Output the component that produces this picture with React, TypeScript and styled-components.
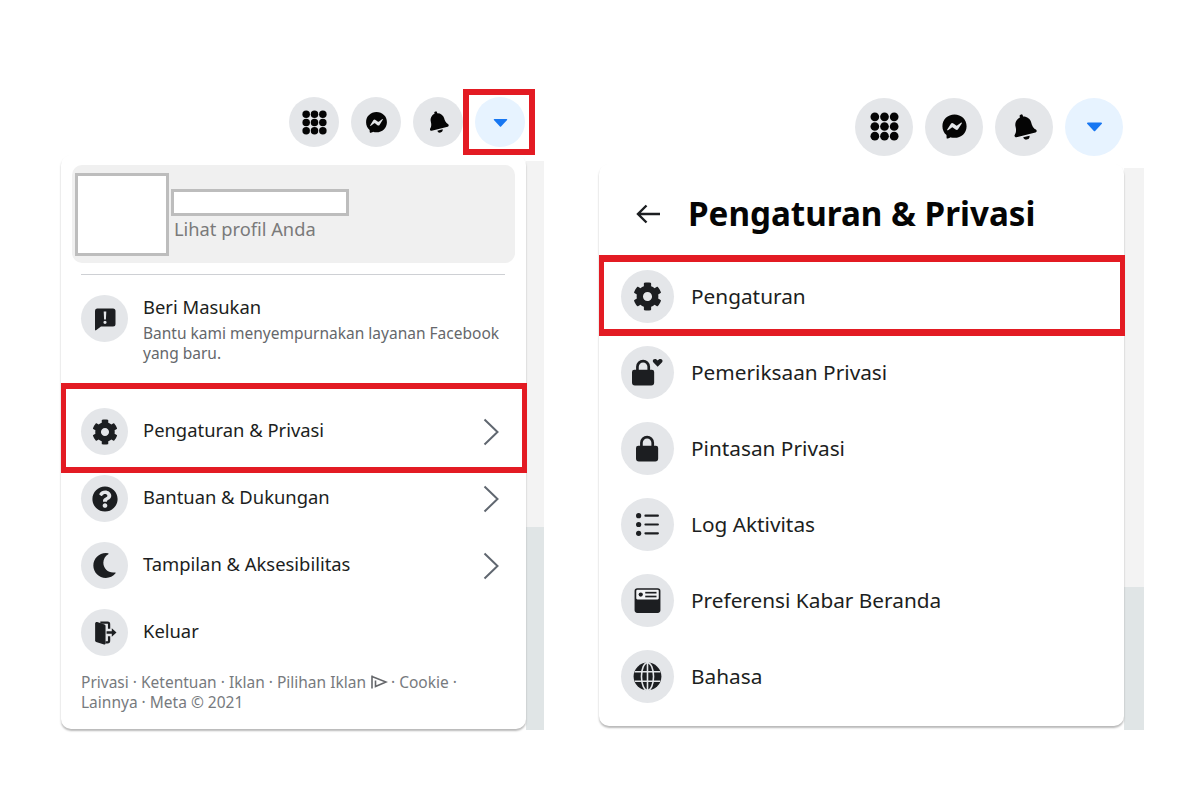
import React from 'react'
import styled, { createGlobalStyle } from 'styled-components'
import { FaBell, FaCog, FaMoon, FaQuestionCircle } from 'react-icons/fa'

const GlobalStyle = createGlobalStyle`
  html, body {
    margin: 0;
    background: #fff;
  }
  body {
    font-family: "Noto Sans", "Open Sans", Arial, sans-serif;
    color: #1c1e21;
  }
`

const Page = styled.div`
  width: 1200px;
  height: 795px;
  padding: 89px 0 0 61px;
  box-sizing: border-box;
  display: flex;
  gap: 55px;
  overflow: hidden;
`

const Screen = styled.section<{ $width: number }>`
  width: ${({ $width }) => $width}px;
  display: flex;
  flex-direction: column;
`

const NavBar = styled.div<{ $size: number; $gap: number; $height: number; $right: number }>`
  height: ${({ $height }) => $height}px;
  padding-right: ${({ $right }) => $right}px;
  display: flex;
  align-items: center;
  justify-content: flex-end;
  gap: ${({ $gap }) => $gap}px;
  --nav-size: ${({ $size }) => $size}px;
`

const NavButton = styled.div<{ $active?: boolean; $marked?: boolean }>`
  position: relative;
  width: var(--nav-size);
  height: var(--nav-size);
  border-radius: 50%;
  background: ${({ $active }) => ($active ? '#e7f3ff' : '#e4e6e9')};
  display: flex;
  align-items: center;
  justify-content: center;
  color: #050505;
  ${({ $marked }) =>
    $marked &&
    `
    &::after {
      content: '';
      position: absolute;
      left: -12px;
      top: -8px;
      width: 72px;
      height: 66px;
      box-sizing: border-box;
      border: 6px solid #e31b23;
    }
  `}
`

const Body = styled.div`
  display: flex;
  align-items: stretch;
`

const Panel = styled.div<{ $width: number; $height: number }>`
  width: ${({ $width }) => $width}px;
  height: ${({ $height }) => $height}px;
  flex: none;
  background: #fff;
  border-radius: 10px;
  box-shadow: 0 2px 2px rgba(0, 0, 0, 0.28);
  position: relative;
  z-index: 1;
  box-sizing: border-box;
`

const Backdrop = styled.div<{ $split: number; $top: number; $bottom: number }>`
  flex: 1;
  margin: ${({ $top }) => $top}px 0 ${({ $bottom }) => $bottom}px;
  background: linear-gradient(
    to bottom,
    #f3f3f3 0,
    #f3f3f3 ${({ $split }) => $split}px,
    #e0e5e6 ${({ $split }) => $split}px,
    #e0e5e6 100%
  );
`

const ProfileCard = styled.div`
  margin: 10px 11px 0;
  height: 98px;
  border-radius: 10px;
  background: #f0f0f0;
  display: flex;
  padding: 8px 3px;
  box-sizing: border-box;
`

const Avatar = styled.div`
  width: 94px;
  height: 83px;
  flex: none;
  box-sizing: border-box;
  background: #fff;
  border: 3px solid #bdbdbd;
`

const ProfileText = styled.div`
  margin-left: 2px;
  padding-top: 16px;
`

const NameBox = styled.div`
  width: 178px;
  height: 27px;
  box-sizing: border-box;
  background: #fff;
  border: 3px solid #bdbdbd;
`

const ProfileLink = styled.div`
  margin: 1px 0 0 3px;
  font-size: 18.3px;
  line-height: 24px;
  color: #7a7a7a;
`

const Divider = styled.hr`
  margin: 11px 21px 0 20px;
  border: 0;
  height: 1px;
  background: #ced0d4;
`

const Row = styled.div<{ $height: number; $left: number; $gap: number; $marked?: 'left' | 'right' }>`
  position: relative;
  height: ${({ $height }) => $height}px;
  padding-left: ${({ $left }) => $left}px;
  display: flex;
  align-items: center;
  gap: ${({ $gap }) => $gap}px;
  ${({ $marked }) =>
    $marked === 'left' &&
    `
    &::after {
      content: '';
      position: absolute;
      left: 0;
      right: -1px;
      top: -15px;
      bottom: -8px;
      box-sizing: border-box;
      border-style: solid;
      border-color: #e31b23;
      border-width: 6px 5px;
    }
  `}
  ${({ $marked }) =>
    $marked === 'right' &&
    `
    &::after {
      content: '';
      position: absolute;
      left: 0;
      right: -1px;
      top: -3px;
      bottom: -2px;
      box-sizing: border-box;
      border-style: solid;
      border-color: #e31b23;
      border-width: 7px 5px;
    }
  `}
`

const FeedbackRow = styled.div`
  display: flex;
  gap: 15px;
  padding: 20px 0 0 20px;
  height: 98px;
  margin-bottom: 25px;
  box-sizing: border-box;
`

const IconCircle = styled.div<{ $size: number }>`
  width: ${({ $size }) => $size}px;
  height: ${({ $size }) => $size}px;
  flex: none;
  border-radius: 50%;
  background: #e4e6e9;
  display: flex;
  align-items: center;
  justify-content: center;
  color: #1c1e21;
`

const RowLabel = styled.span`
  font-size: 18.4px;
  line-height: 26px;
  padding-bottom: 3px;
  color: #1c1e21;
  flex: 1;
`

const FeedbackText = styled.div`
  margin-top: -1px;
`

const FeedbackTitle = styled.div`
  font-size: 18.4px;
  line-height: 26px;
`

const FeedbackHint = styled.div`
  margin-top: 3px;
  width: 375px;
  font-size: 15.5px;
  line-height: 20px;
  color: #65676b;
`

const Chevron = styled.svg`
  width: 16px;
  height: 28px;
  margin-right: 27px;
  flex: none;
  fill: none;
  stroke: #606770;
  stroke-width: 2;
`

const Legal = styled.div`
  margin: 6px 0 0 20px;
  font-size: 15.5px;
  line-height: 20px;
  color: #777a7e;
`

const LegalLine = styled.div`
  white-space: nowrap;
`

const AdMark = styled.svg`
  width: 18px;
  height: 16px;
  margin: 0 3px 0 4px;
  vertical-align: -2px;
  fill: none;
  stroke: #65676b;
  stroke-width: 1.6;
`

const PanelHeader = styled.div`
  height: 91px;
  display: flex;
  align-items: center;
  padding: 8px 0 0 37px;
  gap: 28px;
  box-sizing: border-box;
`

const BackArrow = styled.svg`
  width: 24px;
  height: 20px;
  flex: none;
  fill: none;
  stroke: #1c1e21;
  stroke-width: 2.4;
`

const PanelTitle = styled.h1`
  margin: 0;
  font-size: 33.2px;
  font-weight: 700;
  color: #050505;
  letter-spacing: 0;
`

const SettingsList = styled.div`
  display: flex;
  flex-direction: column;
  padding-top: 3px;
`

const SettingsLabel = styled.span`
  font-size: 20.8px;
  color: #1c1e21;
`

function GridIcon({ size }: { size: number }) {
  const cells = [4, 12, 20]
  return (
    <svg width={size} height={size} viewBox="0 0 24 24" fill="currentColor">
      {cells.map(y => cells.map(x => <circle key={`${x}-${y}`} cx={x} cy={y} r="3.6" />))}
    </svg>
  )
}

function MessengerIcon({ size }: { size: number }) {
  return (
    <svg width={size} height={size} viewBox="0 0 24 24" fill="currentColor">
      <path d="M12 2C6.36 2 2 6.13 2 11.7c0 2.91 1.19 5.44 3.14 7.17.16.14.26.35.27.57l.05 1.78c.02.57.61.94 1.13.71l1.98-.87c.17-.08.36-.09.53-.04.91.25 1.88.38 2.9.38 5.64 0 10-4.13 10-9.7S17.64 2 12 2zm6 7.46-2.94 4.66a1.5 1.5 0 0 1-2.17.4l-2.34-1.75a.6.6 0 0 0-.72 0l-3.16 2.4c-.42.32-.97-.18-.69-.63l2.94-4.66a1.5 1.5 0 0 1 2.17-.4l2.34 1.75a.6.6 0 0 0 .72 0l3.16-2.4c.42-.32.97.18.69.63z" />
    </svg>
  )
}

function CaretIcon({ size }: { size: number }) {
  return (
    <svg width={size} height={size} viewBox="0 0 24 24" fill="#1877f2">
      <path d="M3.5 7h17a1 1 0 0 1 .8 1.6l-8.500 9a1.100 1.100 0 0 1-1.600 0l-8.500-9A1 1 0 0 1 3.500 7z" />
    </svg>
  )
}

function BellIcon({ size }: { size: number }) {
  return <FaBell size={size} style={{ transform: 'rotate(-14deg)' }} />
}

function FeedbackIcon({ size }: { size: number }) {
  return (
    <svg width={size} height={size} viewBox="0 0 24 24">
      <path
        fill="currentColor"
        d="M4 1.500h16A2.500 2.500 0 0 1 22.500 4v13a2.500 2.500 0 0 1-2.500 2.500H8l-5 3.800c-.5.3-1 0-1-.5V4A2.500 2.500 0 0 1 4 1.500z"
      />
      <path fill="#e4e6e9" d="M10.700 4.500h2.600l-.4 8h-1.800zM12 13.700a1.600 1.600 0 1 1 0 3.200 1.600 1.600 0 0 1 0-3.200z" />
    </svg>
  )
}

function DoorIcon({ size }: { size: number }) {
  return (
    <svg width={size} height={size} viewBox="0 0 24 24" fill="currentColor">
      <path d="M3 3.400C3 2.400 4 1.700 5 2l7 2.300c.6.2 1 .8 1 1.400v16.800c0 .7-.7 1.200-1.400 1L4 21c-.6-.2-1-.7-1-1.400z" />
      <path d="M8 1.500h7A2.500 2.500 0 0 1 17.500 4v4.500h-2.200V4c0-.2-.1-.3-.3-.3H8zM15.300 15.500h2.200V20a2.500 2.500 0 0 1-2.500 2.500h-2v-2.200h2c.2 0 .3-.1.3-.3z" />
      <path d="M14 10.700h5V8l4.500 4-4.500 4v-2.700h-5z" />
    </svg>
  )
}

const lockShape =
  'M3.500 10V7.500a6 6 0 0 1 12 0V10H17a2 2 0 0 1 2 2v9a2.500 2.500 0 0 1-2.500 2.500h-14A2.500 2.500 0 0 1 0 21v-9a2 2 0 0 1 2-2zm2.300 0h7.400V7.500a3.700 3.700 0 0 0-7.400 0z'

function LockIcon({ height }: { height: number }) {
  return (
    <svg width={(height * 19) / 24} height={height} viewBox="0 0 19 24" fill="currentColor">
      <path d={lockShape} />
    </svg>
  )
}

function LockHeartIcon({ height }: { height: number }) {
  return (
    <svg width={(height * 27) / 24} height={height} viewBox="0 0 27 24" fill="currentColor">
      <path d={lockShape} />
      <path d="M22 7.500 18.400 3.900C17.200 2.600 18 .8 19.700 .8c1 0 1.800.5 2.300 1.300.5-.8 1.300-1.300 2.300-1.300 1.700 0 2.500 1.800 1.300 3.100z" />
    </svg>
  )
}

function ListIcon({ size }: { size: number }) {
  return (
    <svg width={size} height={size} viewBox="0 0 24 24" fill="currentColor">
      <circle cx="3.500" cy="3.500" r="2.500" />
      <circle cx="3.500" cy="12" r="2.500" />
      <circle cx="3.500" cy="20.500" r="2.500" />
      <rect x="9" y="2.500" width="14" height="2" rx="1" />
      <rect x="9" y="11" width="14" height="2" rx="1" />
      <rect x="9" y="19.500" width="14" height="2" rx="1" />
    </svg>
  )
}

function FeedPrefsIcon({ size }: { size: number }) {
  return (
    <svg width={size} height={size} viewBox="0 0 24 24">
      <rect x="0.500" y="1" width="23" height="22" rx="2.500" fill="currentColor" />
      <rect x="2" y="2.500" width="20" height="8.500" rx="1" fill="#f2f3f5" />
      <circle cx="6" cy="6.700" r="1.900" fill="currentColor" />
      <rect x="10" y="4.300" width="10" height="1.500" fill="currentColor" />
      <rect x="10" y="7.700" width="10" height="1.500" fill="currentColor" />
    </svg>
  )
}

function GlobeIcon({ size }: { size: number }) {
  return (
    <svg width={size} height={size} viewBox="0 0 24 24">
      <circle cx="12" cy="12" r="11.500" fill="currentColor" />
      <g fill="none" stroke="#e4e6e9" strokeWidth="1.300">
        <ellipse cx="12" cy="12" rx="5" ry="11.500" />
        <path d="M12 .5v23M1.500 8h21M1.500 16h21" />
      </g>
    </svg>
  )
}

const accountRows = [
  { label: 'Pengaturan & Privasi', icon: <FaCog size={26} />, more: true, marked: true },
  { label: 'Bantuan & Dukungan', icon: <FaQuestionCircle size={26} />, more: true },
  { label: 'Tampilan & Aksesibilitas', icon: <FaMoon size={25} />, more: true },
  { label: 'Keluar', icon: <DoorIcon size={25} /> },
]

const settingsRows = [
  { label: 'Pengaturan', icon: <FaCog size={29} />, marked: true },
  { label: 'Pemeriksaan Privasi', icon: <LockHeartIcon height={28} /> },
  { label: 'Pintasan Privasi', icon: <LockIcon height={28} /> },
  { label: 'Log Aktivitas', icon: <ListIcon size={25} /> },
  { label: 'Preferensi Kabar Beranda', icon: <FeedPrefsIcon size={27} /> },
  { label: 'Bahasa', icon: <GlobeIcon size={29} /> },
]

export default function App() {
  return (
    <Page>
      <GlobalStyle />

      <Screen $width={483}>
        <NavBar $size={50} $gap={12} $height={66} $right={19}>
          <NavButton><GridIcon size={25} /></NavButton>
          <NavButton><MessengerIcon size={25} /></NavButton>
          <NavButton><BellIcon size={22} /></NavButton>
          <NavButton $active $marked><CaretIcon size={17} /></NavButton>
        </NavBar>
        <Body>
          <Panel $width={465} $height={574}>
            <ProfileCard>
              <Avatar />
              <ProfileText>
                <NameBox />
                <ProfileLink>Lihat profil Anda</ProfileLink>
              </ProfileText>
            </ProfileCard>
            <Divider />
            <FeedbackRow>
              <IconCircle $size={47}><FeedbackIcon size={24} /></IconCircle>
              <FeedbackText>
                <FeedbackTitle>Beri Masukan</FeedbackTitle>
                <FeedbackHint>Bantu kami menyempurnakan layanan Facebook yang baru.</FeedbackHint>
              </FeedbackText>
            </FeedbackRow>
            {accountRows.map(row => (
              <Row key={row.label} $height={67} $left={20} $gap={15} $marked={row.marked ? 'left' : undefined}>
                <IconCircle $size={47}>{row.icon}</IconCircle>
                <RowLabel>{row.label}</RowLabel>
                {row.more && (
                  <Chevron viewBox="0 0 16 28">
                    <path d="M1.500 1.500 14.500 14 1.500 26.500" />
                  </Chevron>
                )}
              </Row>
            ))}
            <Legal>
              <LegalLine>
                Privasi · Ketentuan · Iklan · Pilihan Iklan
                <AdMark viewBox="0 0 18 16">
                  <path d="M2 1.500v13M2 2.500 16 8 5.500 12.500V6.500" />
                </AdMark>
                · Cookie ·
              </LegalLine>
              <LegalLine>Lainnya · Meta © 2021</LegalLine>
            </Legal>
          </Panel>
          <Backdrop $split={366} $top={6} $bottom={-1} />
        </Body>
      </Screen>

      <Screen $width={545}>
        <NavBar $size={58} $gap={12} $height={75} $right={21}>
          <NavButton><GridIcon size={29} /></NavButton>
          <NavButton><MessengerIcon size={29} /></NavButton>
          <NavButton><BellIcon size={26} /></NavButton>
          <NavButton $active><CaretIcon size={19} /></NavButton>
        </NavBar>
        <Body>
          <Panel $width={525} $height={562}>
            <PanelHeader>
              <BackArrow viewBox="0 0 24 20">
                <path d="M24 10H2M10.500 1.500 2 10l8.500 8.500" />
              </BackArrow>
              <PanelTitle>Pengaturan &amp; Privasi</PanelTitle>
            </PanelHeader>
            <SettingsList>
              {settingsRows.map(row => (
                <Row key={row.label} $height={76} $left={22} $gap={17} $marked={row.marked ? 'right' : undefined}>
                  <IconCircle $size={53}>{row.icon}</IconCircle>
                  <SettingsLabel>{row.label}</SettingsLabel>
                </Row>
              ))}
            </SettingsList>
          </Panel>
          <Backdrop $split={419} $top={4} $bottom={-4} />
        </Body>
      </Screen>
    </Page>
  )
}
